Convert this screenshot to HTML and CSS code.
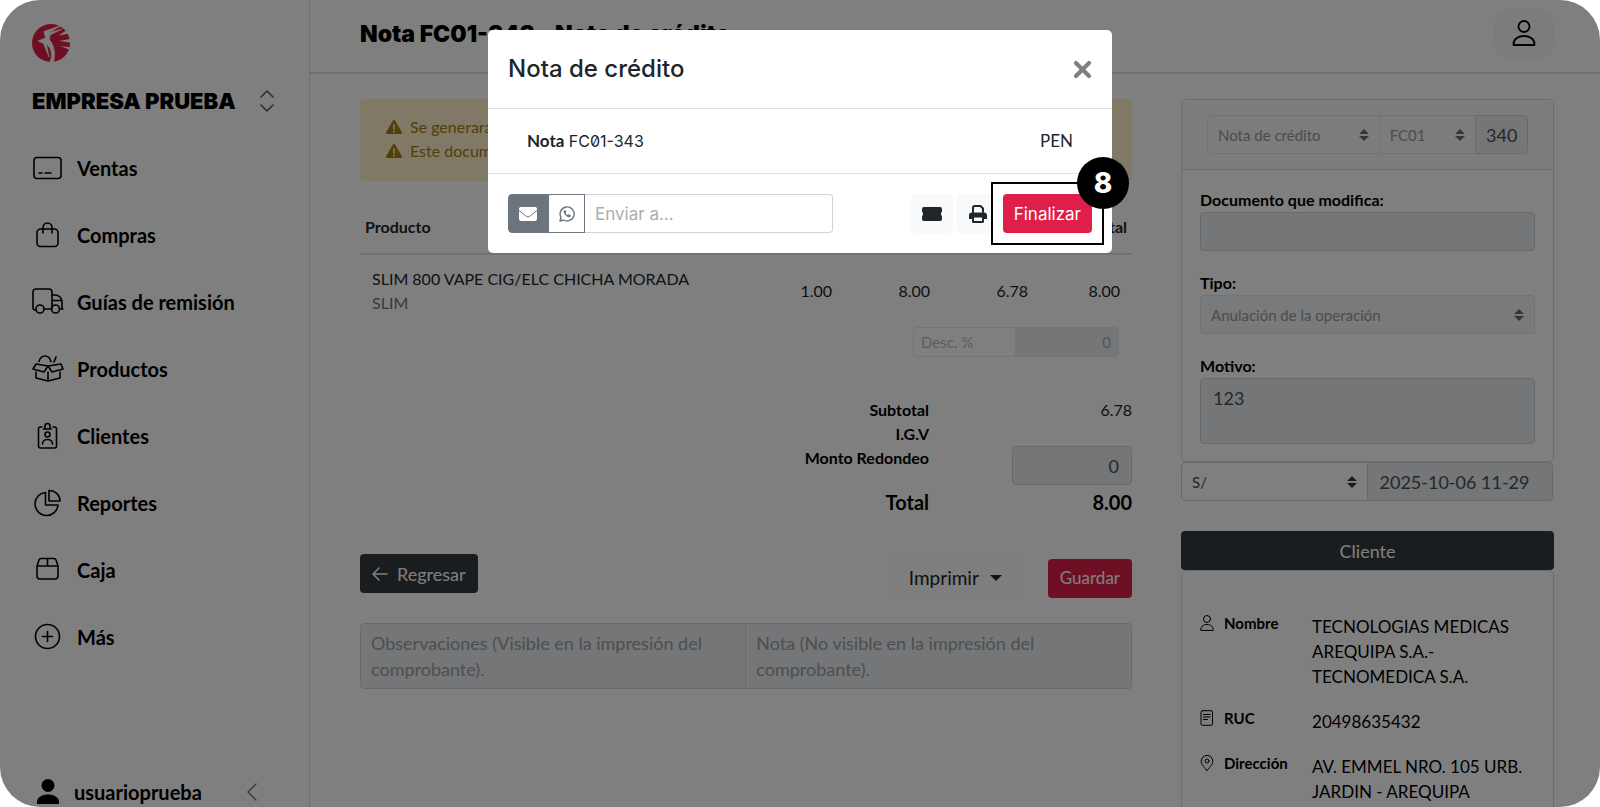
FILE: index.html
```html
<!DOCTYPE html>
<html lang="es">
<head>
    <meta charset="UTF-8">
    <meta name="viewport" content="width=device-width, initial-scale=1.0">
    <title>Nota FC01-343 - Nota de crédito</title>
    <link rel="stylesheet" href="styles.css">
</head>
<body>
    <div class="app">
        <aside class="sidebar">
            <svg class="logo" viewBox="0 0 38 38" aria-hidden="true">
                <circle cx="19" cy="19" r="19" fill="#df1f49"/>
                <path d="M30 1L12 7.500L13.500 14L6 17L11.500 19.500L17 33L14.500 20L18 24C20 29 20 33 18 38H21.500C24 30 22 21 17.500 16L18 11L30 5L16.500 9Z" fill="#fff" stroke="#fff" stroke-width=".6"/>
                <path d="M34 6.500L26.500 11.500L37 9.500zM38 15L27 17L39 18.500zM39 23.500L28.500 22L38 26z" fill="#fff"/>
            </svg>
            <button class="company" type="button">
                <span>EMPRESA PRUEBA</span>
                <svg class="company-arrows" viewBox="0 0 14 22" aria-hidden="true"><path d="M1 7l6-6 6 6M1 15l6 6 6-6"/></svg>
            </button>
            <nav class="menu">
                <a href="#"><svg viewBox="0 0 32 32"><rect x="2" y="5.500" width="27" height="21" rx="3"/><path d="M7 21h3M13 21h6"/></svg>Ventas</a>
                <a href="#"><svg viewBox="0 0 32 32"><rect x="5" y="10" width="21" height="17.500" rx="3.500"/><path d="M11 14V8.500a4.500 4.500 0 0 1 9 0V14"/></svg>Compras</a>
                <a href="#"><svg viewBox="0 0 32 32"><path d="M4 24H3a2 2 0 0 1-2-2V6a3 3 0 0 1 3-3h13a3 3 0 0 1 3 3v16M12 23h8M20 9h3c4 0 7 3 7 7v6.500M20 14.500h9M27.500 23H31"/><circle cx="8" cy="23" r="4"/><circle cx="23.500" cy="23" r="4"/></svg>Guías de remisión</a>
                <a href="#"><svg viewBox="0 0 32 32"><path d="M16 13L4 11l-3 5 11 3 4-6 4 6 11-3-2-5-13 2zM4 19v6l12 3 12-3v-6M16 19v9M7 8.500C8 5 10 3 13 3s5 2 6 5.500M24 4l-2 5"/></svg>Productos</a>
                <a href="#"><svg viewBox="0 0 32 32"><path d="M10 7H8.500A2 2 0 0 0 6.500 9v17a2 2 0 0 0 2 2h14a2 2 0 0 0 2-2V9a2 2 0 0 0-2-2H21M11.500 9h8M13 8V6a2.500 2.500 0 0 1 5 0v2M10.500 24c0-6 10-6 10 0"/><circle cx="15.500" cy="14.500" r="2.500"/></svg>Clientes</a>
                <a href="#"><svg viewBox="0 0 32 32"><path d="M13.500 5.500A11.500 11.500 0 1 0 26 18H13.500z"/><path d="M17 3.500V14h11A10.500 10.500 0 0 0 17 3.500z"/></svg>Reportes</a>
                <a href="#"><svg viewBox="0 0 32 32"><path d="M5 12l2-6a2.500 2.500 0 0 1 2-1.500h13A2.500 2.500 0 0 1 24 6l2 6v10a3 3 0 0 1-3 3H8a3 3 0 0 1-3-3zM5 12h21M15.500 5v7"/></svg>Caja</a>
                <a href="#"><svg viewBox="0 0 32 32"><circle cx="15.500" cy="15.500" r="12"/><path d="M10.500 15.500h10M15.500 10.500v10"/></svg>Más</a>
            </nav>
            <div class="user">
                <svg class="user-icon" viewBox="0 0 22 26" aria-hidden="true"><circle cx="11" cy="6.500" r="6.500"/><path d="M0 25v-2c0-10 22-10 22 0v2z"/></svg>
                <span>usuarioprueba</span>
                <button class="collapse" type="button" aria-label="Contraer menú">
                    <svg viewBox="0 0 10 18"><path d="M9 1L1 9l8 8"/></svg>
                </button>
            </div>
        </aside>

        <main class="page">
            <header class="topbar">
                <h1>Nota FC01-343 - Nota de crédito</h1>
                <button class="profile" type="button" aria-label="Mi cuenta">
                    <svg viewBox="0 0 24 28"><circle cx="12" cy="7.500" r="5.500"/><path d="M1.500 26c-1-12 22-12 21 0z"/></svg>
                </button>
            </header>

            <div class="columns">
                <section class="document">
                    <div class="alert">
                        <p><svg viewBox="0 0 16 14"><path d="M8 0a1 1 0 0 1 1 .500l7 12a1 1 0 0 1-1 1.500H1a1 1 0 0 1-1-1.500l7-12A1 1 0 0 1 8 0z"/><path class="mark" d="M8 4.500v4.500M8 11v1.200"/></svg>Se generará</p>
                        <p><svg viewBox="0 0 16 14"><path d="M8 0a1 1 0 0 1 1 .500l7 12a1 1 0 0 1-1 1.500H1a1 1 0 0 1-1-1.500l7-12A1 1 0 0 1 8 0z"/><path class="mark" d="M8 4.500v4.500M8 11v1.200"/></svg>Este documento</p>
                    </div>

                    <table class="items">
                        <thead>
                            <tr><th>Producto</th><th></th><th></th><th></th><th>Total</th></tr>
                        </thead>
                        <tbody>
                            <tr>
                                <td>SLIM 800 VAPE CIG/ELC CHICHA MORADA<small>SLIM</small></td>
                                <td>1.00</td><td>8.00</td><td>6.78</td><td>8.00</td>
                            </tr>
                        </tbody>
                    </table>
                    <div class="discount">
                        <input type="text" placeholder="Desc. %" aria-label="Descuento %">
                        <input class="filled" type="text" value="0" aria-label="Monto de descuento" disabled>
                    </div>

                    <div class="totals">
                        <b>Subtotal</b><span>6.78</span>
                        <b>I.G.V</b><span></span>
                        <label for="redondeo">Monto Redondeo</label><input id="redondeo" class="control" type="text" value="0" disabled>
                        <b class="grand">Total</b><span class="grand">8.00</span>
                    </div>

                    <div class="actions">
                        <button class="btn btn-dark" type="button"><svg viewBox="0 0 16 14"><path d="M15 7H1M7 1L1 7l6 6"/></svg>Regresar</button>
                        <div class="actions-right">
                            <button class="btn-print" type="button">Imprimir<i class="caret"></i></button>
                            <button class="btn btn-brand" type="button">Guardar</button>
                        </div>
                    </div>

                    <div class="notes">
                        <textarea class="control" aria-label="Observaciones" placeholder="Observaciones (Visible en la impresión del comprobante)." disabled></textarea>
                        <textarea class="control" aria-label="Nota" placeholder="Nota (No visible en la impresión del comprobante)." disabled></textarea>
                    </div>
                </section>

                <section class="details">
                    <div class="card">
                        <div class="card-head">
                            <div class="group">
                                <select class="select type" aria-label="Tipo de documento" disabled><option>Nota de crédito</option></select>
                                <select class="select serie" aria-label="Serie" disabled><option>FC01</option></select>
                                <input class="control number" type="text" value="340" aria-label="Número" readonly>
                            </div>
                        </div>
                        <div class="card-body">
                            <label for="doc">Documento que modifica:</label>
                            <input id="doc" class="control" type="text" disabled>
                            <label for="tipo">Tipo:</label>
                            <select id="tipo" class="select wide" disabled><option>Anulación de la operación</option></select>
                            <label for="motivo">Motivo:</label>
                            <textarea id="motivo" class="control" disabled>123</textarea>
                        </div>
                    </div>
                    <div class="group money">
                        <select class="select" aria-label="Moneda"><option>S/</option></select>
                        <input class="control" type="text" value="2025-10-06 11-29" aria-label="Fecha" readonly>
                    </div>

                    <button class="btn btn-dark btn-client" type="button">Cliente</button>
                    <dl class="card client">
                        <dt><svg viewBox="0 0 14 16"><circle cx="7" cy="4" r="3.500"/><path d="M.700 15c-.500-7.500 13.100-7.500 12.600 0z"/></svg>Nombre</dt>
                        <dd>TECNOLOGIAS MEDICAS AREQUIPA S.A.-TECNOMEDICA S.A.</dd>
                        <dt><svg viewBox="0 0 14 16"><rect x="1" y=".700" width="11.500" height="14.600" rx="1.500"/><path d="M3.500 4.500h6.500M3.500 7h6.500M3.500 9.500h4"/></svg>RUC</dt>
                        <dd>20498635432</dd>
                        <dt><svg viewBox="0 0 14 16"><path d="M7 15.500C3 11 1.200 9 1.200 6.200a5.800 5.800 0 0 1 11.600 0C12.800 9 11 11 7 15.500z"/><circle cx="7" cy="6" r="2"/></svg>Dirección</dt>
                        <dd>AV. EMMEL NRO. 105 URB. JARDIN - AREQUIPA</dd>
                    </dl>
                </section>
            </div>
        </main>

        <div class="backdrop">
            <div class="modal" role="dialog" aria-labelledby="modal-title">
                <div class="modal-header">
                    <h2 id="modal-title">Nota de crédito</h2>
                    <button class="close" type="button" aria-label="Cerrar"><svg viewBox="0 0 16 16"><path d="M2.500 2.500l11 11M13.500 2.500l-11 11"/></svg></button>
                </div>
                <div class="modal-body">
                    <span><b>Nota</b> <span class="code">FC01-343</span></span>
                    <span>PEN</span>
                </div>
                <div class="modal-footer">
                    <div class="send">
                        <button class="send-mail" type="button" aria-label="Correo"><svg viewBox="0 0 18 14"><rect width="18" height="14" rx="2"/><path d="M0 3.500l7.500 6a2.500 2.500 0 0 0 3 0l7.500-6"/></svg></button>
                        <button class="send-wa" type="button" aria-label="WhatsApp"><svg viewBox="0 0 16 16"><path d="M1 15l1-3.700A7 7 0 1 1 4.700 14z"/><path class="phone" d="M5.300 4.200c-1.300 1.300-.4 3.400 1.200 5 1.700 1.700 3.900 2.700 5 1.300.6-.8.4-1.200-.2-1.500l-1.200-.6c-.5-.2-.8.800-1.200.700-1-.3-2-1.300-2.300-2.200-.1-.4.800-.7.600-1.200l-.6-1.300c-.2-.500-.9-.600-1.300-.2z"/></svg></button>
                        <input type="text" placeholder="Enviar a..." aria-label="Enviar a">
                    </div>
                    <div class="modal-buttons">
                        <button class="btn-light" type="button" aria-label="Ticket"><svg viewBox="0 0 20 14"><path d="M2 0h16a2 2 0 0 1 2 2v2.500q-2 2.500 0 5V12a2 2 0 0 1-2 2H2a2 2 0 0 1-2-2V9.500q2-2.500 0-5V2a2 2 0 0 1 2-2z"/></svg></button>
                        <button class="btn-light" type="button" aria-label="Imprimir"><svg viewBox="0 0 18 18"><path d="M4 7V2.500A1.500 1.500 0 0 1 5.500 1h6L14 3.500V7" fill="none" stroke="#212529" stroke-width="2"/><path fill-rule="evenodd" d="M3 7.500h12a3 3 0 0 1 3 3V14h-3v2.500a1.500 1.500 0 0 1-1.500 1.500h-9A1.500 1.500 0 0 1 3 16.500V14H0v-3.500a3 3 0 0 1 3-3zM5 12.500V16h8v-3.500z"/></svg></button>
                        <div class="step">
                            <button class="btn btn-brand" type="button">Finalizar</button>
                            <span class="step-number">8</span>
                        </div>
                    </div>
                </div>
            </div>
        </div>
    </div>
</body>
</html>
```
FILE: styles.css
```css
* {
    margin: 0;
    padding: 0;
    box-sizing: border-box;
}

body {
    font-family: Lato, "Liberation Sans", sans-serif;
    font-size: 16px;
    line-height: 24px;
    color: #000;
    background: #fff;
}

button, input, select, textarea {
    font: inherit;
    color: inherit;
}

button {
    border: 0;
    background: none;
    cursor: pointer;
}

svg {
    fill: none;
    stroke: currentColor;
    stroke-linecap: round;
    stroke-linejoin: round;
    flex: none;
}

.app {
    position: relative;
    display: flex;
    height: 100vh;
    overflow: hidden;
    border-radius: 40px;
    background: #fff;
}

/* Sidebar */
.sidebar {
    display: flex;
    flex-direction: column;
    width: 310px;
    flex: none;
    padding: 24px 32px 0;
    border-right: 1px solid #dcdcdc;
}

.logo {
    width: 38px;
    height: 38px;
    stroke: none;
}

.company {
    display: flex;
    align-items: center;
    justify-content: space-between;
    margin: 24px 3px 32px 0;
    height: 30px;
    font-family: Inter, "Liberation Sans", sans-serif;
    font-size: 22px;
    font-weight: 900;
}

.company-arrows {
    width: 14px;
    height: 22px;
    stroke: #555;
    stroke-width: 1.5;
}

.menu {
    flex: 1;
}

.menu a {
    display: flex;
    align-items: center;
    gap: 14px;
    height: 40px;
    margin-bottom: 27px;
    font-size: 20px;
    font-weight: 700;
    color: #000;
    text-decoration: none;
}

.menu svg {
    width: 32px;
    height: 32px;
    margin-right: -1px;
    stroke-width: 1.6;
}

.user {
    display: flex;
    align-items: center;
    height: 30px;
    padding-left: 5px;
    font-size: 20px;
    font-weight: 700;
}

.user-icon {
    width: 22px;
    height: 26px;
    margin-right: 15px;
    fill: #000;
    stroke: none;
}

.collapse {
    margin-left: auto;
    margin-right: 20px;
}

.collapse svg {
    display: block;
    width: 10px;
    height: 18px;
    stroke: #777;
    stroke-width: 1.5;
}

/* Top bar */
.page {
    flex: 1;
    min-width: 0;
}

.topbar {
    display: flex;
    align-items: flex-start;
    justify-content: space-between;
    height: 74px;
    padding: 8px 46px 0 50px;
    border-bottom: 2px solid #dcdcdc;
}

.topbar h1 {
    margin-top: 10px;
    font-family: Inter, "Liberation Sans", sans-serif;
    font-size: 23px;
    line-height: 32px;
    font-weight: 900;
}

.profile {
    display: flex;
    align-items: center;
    justify-content: center;
    width: 60px;
    height: 50px;
    border-radius: 16px;
    background: #f8f8f8;
}

.profile svg {
    width: 24px;
    height: 28px;
    stroke-width: 1.8;
}

.columns {
    display: grid;
    grid-template-columns: 2.07fr 1fr;
    gap: 49px;
    padding: 25px 46px 0 50px;
}

.document, .details {
    min-width: 0;
}

/* Shared controls */
.control {
    display: block;
    width: 100%;
    height: 39px;
    padding: 6px 12px;
    border: 1px solid #ced4da;
    border-radius: 4px;
    background: #e9ecef;
    color: #495057;
    font-size: 18px;
}

textarea.control {
    height: 66px;
    line-height: 26px;
    resize: none;
}

.control::placeholder {
    color: #9a9ea2;
}

.select {
    display: block;
    appearance: none;
    height: 39px;
    min-width: 0;
    padding: 0 10px;
    border: 1px solid #ced4da;
    border-radius: 4px;
    font-size: 15px;
    color: #495057;
    background: #fff url("data:image/svg+xml,%3Csvg xmlns='http://www.w3.org/2000/svg' viewBox='0 0 10 12'%3E%3Cpath fill='%23343a40' d='M5 0l5 5H0zM0 7h10l-5 5z'/%3E%3C/svg%3E") no-repeat right 10px center / 10px 12px;
}

.select:disabled {
    opacity: 1;
    color: #999;
    border-color: #e2e5e8;
    background-color: #f8f8f8;
    background-image: url("data:image/svg+xml,%3Csvg xmlns='http://www.w3.org/2000/svg' viewBox='0 0 10 12'%3E%3Cpath fill='%236c6c6c' d='M5 0l5 5H0zM0 7h10l-5 5z'/%3E%3C/svg%3E");
}

.group {
    display: flex;
}

.group > * {
    border-radius: 0;
}

.group > :first-child {
    border-radius: 4px 0 0 4px;
}

.group > :last-child {
    border-radius: 0 4px 4px 0;
}

.group > * + * {
    margin-left: -1px;
}

.btn {
    height: 39px;
    padding: 0 12px;
    border-radius: 4px;
    font-size: 18px;
    color: #fff;
}

.btn-dark {
    background: #343a40;
}

.btn-brand {
    background: #df1f49;
    font-size: 17px;
}

/* Document */
.alert {
    padding: 16px 26px 18px;
    border-radius: 4px;
    background: #fff3cd;
    color: #a87c10;
}

.alert p {
    display: flex;
    align-items: center;
    gap: 8px;
}

.alert svg {
    width: 16px;
    height: 14px;
    fill: currentColor;
    stroke: none;
}

.alert .mark {
    stroke: #fff3cd;
    stroke-width: 1.5;
}

.items {
    width: 100%;
    margin-top: 22px;
    border-collapse: collapse;
    color: #212529;
}

.items th {
    padding: 12px 5px 14px;
    text-align: right;
    border-bottom: 2px solid #dee2e6;
}

.items td {
    width: 98px;
    padding: 12px;
    text-align: right;
    vertical-align: middle;
}

.items th:first-child,
.items td:first-child {
    width: auto;
    text-align: left;
}

.items td:last-child {
    width: 92px;
}

.items small {
    display: block;
    font-size: 16px;
    color: #6c757d;
}

.discount {
    display: flex;
    width: 206px;
    height: 30px;
    margin-left: auto;
    margin-right: 13px;
}

.discount input {
    width: 50%;
    padding: 0 7px;
    border: 1px solid #e6e9ec;
    border-radius: 4px 0 0 4px;
    background: #fff;
    font-size: 15px;
}

.discount input::placeholder {
    color: #bbb;
}

.discount .filled {
    border-radius: 0 4px 4px 0;
    background: #e9ecef;
    color: #aaa;
    text-align: right;
}

.totals {
    display: grid;
    grid-template-columns: 1fr 120px;
    column-gap: 83px;
    margin-top: 41px;
    text-align: right;
}

.totals label {
    font-weight: 700;
}

.totals span {
    color: #212529;
}

.totals .control {
    text-align: right;
}

.totals .grand {
    font-size: 20px;
    line-height: 34px;
    font-weight: 700;
    color: #000;
}

.actions {
    display: flex;
    align-items: flex-start;
    justify-content: space-between;
    margin-top: 35px;
}

.actions .btn-dark {
    display: flex;
    align-items: center;
    gap: 9px;
}

.actions .btn-dark svg {
    width: 16px;
    height: 14px;
    stroke-width: 1.5;
}

.actions-right {
    display: flex;
    align-items: center;
    gap: 30px;
    padding-top: 2px;
}

.btn-print {
    display: flex;
    align-items: center;
    height: 44px;
    padding: 0 16px;
    background: #fcfcfc;
    font-size: 19px;
    color: #212529;
}

.caret {
    margin-left: 11px;
    border: 6px solid transparent;
    border-top-color: #212529;
    border-bottom: 0;
}

.notes {
    display: flex;
    margin-top: 23px;
}

.notes .control {
    padding-left: 10px;
}

.notes .control:first-child {
    border-radius: 4px 0 0 4px;
}

.notes .control:last-child {
    border-left: 0;
    border-radius: 0 4px 4px 0;
}

/* Details */
.card {
    border: 1px solid #d8dadd;
    border-radius: 5px;
}

.card-head {
    padding: 15px 25px;
    border-bottom: 1px solid #d8dadd;
    background: #f8f8f8;
}

.type {
    flex: 2;
}

.serie {
    flex: 1;
}

.card-head .number {
    flex: none;
    width: 53px;
    padding: 0 10px;
}

.card-body {
    padding: 18px 18px 17px;
}

.card-body label {
    display: block;
    margin-top: 20px;
    font-weight: 700;
}

.card-body label:first-child {
    margin-top: 0;
}

.wide {
    width: 100%;
}

.card-body .wide:disabled {
    background-color: #f2f4f6;
}

.money > * {
    width: 50%;
}

.btn-client {
    display: block;
    width: 100%;
    margin-top: 30px;
}

.client {
    display: grid;
    grid-template-columns: 112px 1fr;
    row-gap: 20px;
    padding: 43px 18px;
}

.client dt {
    display: flex;
    align-items: center;
    gap: 10px;
    height: 18px;
    font-size: 15px;
    font-weight: 700;
}

.client dt svg {
    width: 14px;
    height: 16px;
    stroke-width: 1;
}

.client dd {
    font-size: 17px;
    line-height: 25px;
}

/* Modal */
.backdrop {
    position: absolute;
    inset: 0;
    padding-top: 30px;
    background: rgba(0, 0, 0, 0.5);
}

.modal {
    width: 624px;
    max-width: 90%;
    margin: 0 auto;
    border-radius: 5px;
    background: #fff;
    color: #212529;
}

.modal-header {
    display: flex;
    align-items: center;
    justify-content: space-between;
    height: 79px;
    padding: 0 20px;
    border-bottom: 1px solid #dee2e6;
}

.modal-header h2 {
    font-family: Inter, "Liberation Sans", sans-serif;
    font-size: 24px;
    font-weight: 500;
}

.close svg {
    display: block;
    width: 19px;
    height: 19px;
    stroke: #7f7f7f;
    stroke-width: 3.5;
}

.modal-body {
    display: flex;
    justify-content: space-between;
    padding: 20px 39px;
    border-bottom: 1px solid #dee2e6;
    font-size: 17px;
}

.code {
    font-family: Inter, "Liberation Sans", sans-serif;
    font-size: 16px;
    font-feature-settings: "zero";
}

.modal-footer {
    display: flex;
    justify-content: space-between;
    padding: 20px;
    font-family: Inter, "Liberation Sans", sans-serif;
}

.send {
    display: flex;
    width: 325px;
    height: 39px;
}

.send button {
    display: flex;
    align-items: center;
    justify-content: center;
    border: 1px solid #6c757d;
}

.send-mail {
    width: 40px;
    border-radius: 4px 0 0 4px;
    background: #6c757d;
}

.send-mail svg {
    width: 18px;
    height: 14px;
    fill: #fff;
    stroke: none;
}

.send-mail path {
    fill: none;
    stroke: #6c757d;
}

.send-wa {
    width: 37px;
    color: #6c757d;
}

.send-wa svg {
    width: 16px;
    height: 16px;
    stroke-width: 1.4;
}

.send-wa .phone {
    fill: currentColor;
    stroke: none;
}

.send input {
    flex: 1;
    min-width: 0;
    padding: 0 10px;
    border: 1px solid #ced4da;
    border-left: 0;
    border-radius: 0 4px 4px 0;
    font-size: 17px;
}

.send input::placeholder {
    color: #a9aeb3;
}

.modal-buttons {
    display: flex;
    gap: 4px;
}

.btn-light {
    display: flex;
    align-items: center;
    justify-content: center;
    width: 42px;
    height: 39px;
    border-radius: 4px;
    background: #f8f9fa;
}

.btn-light svg {
    width: 20px;
    height: 18px;
    fill: #212529;
    stroke: none;
}

.step {
    position: relative;
}

.step::before {
    content: "";
    position: absolute;
    inset: -12px;
    border: 2px solid #000;
    background: #fff;
}

.step .btn {
    position: relative;
    padding: 0 11px;
}

.step-number {
    position: absolute;
    top: -37px;
    right: -37px;
    width: 52px;
    height: 52px;
    border-radius: 50%;
    background: #000;
    color: #fff;
    font-size: 28px;
    line-height: 52px;
    font-weight: 800;
    text-align: center;
}
```
